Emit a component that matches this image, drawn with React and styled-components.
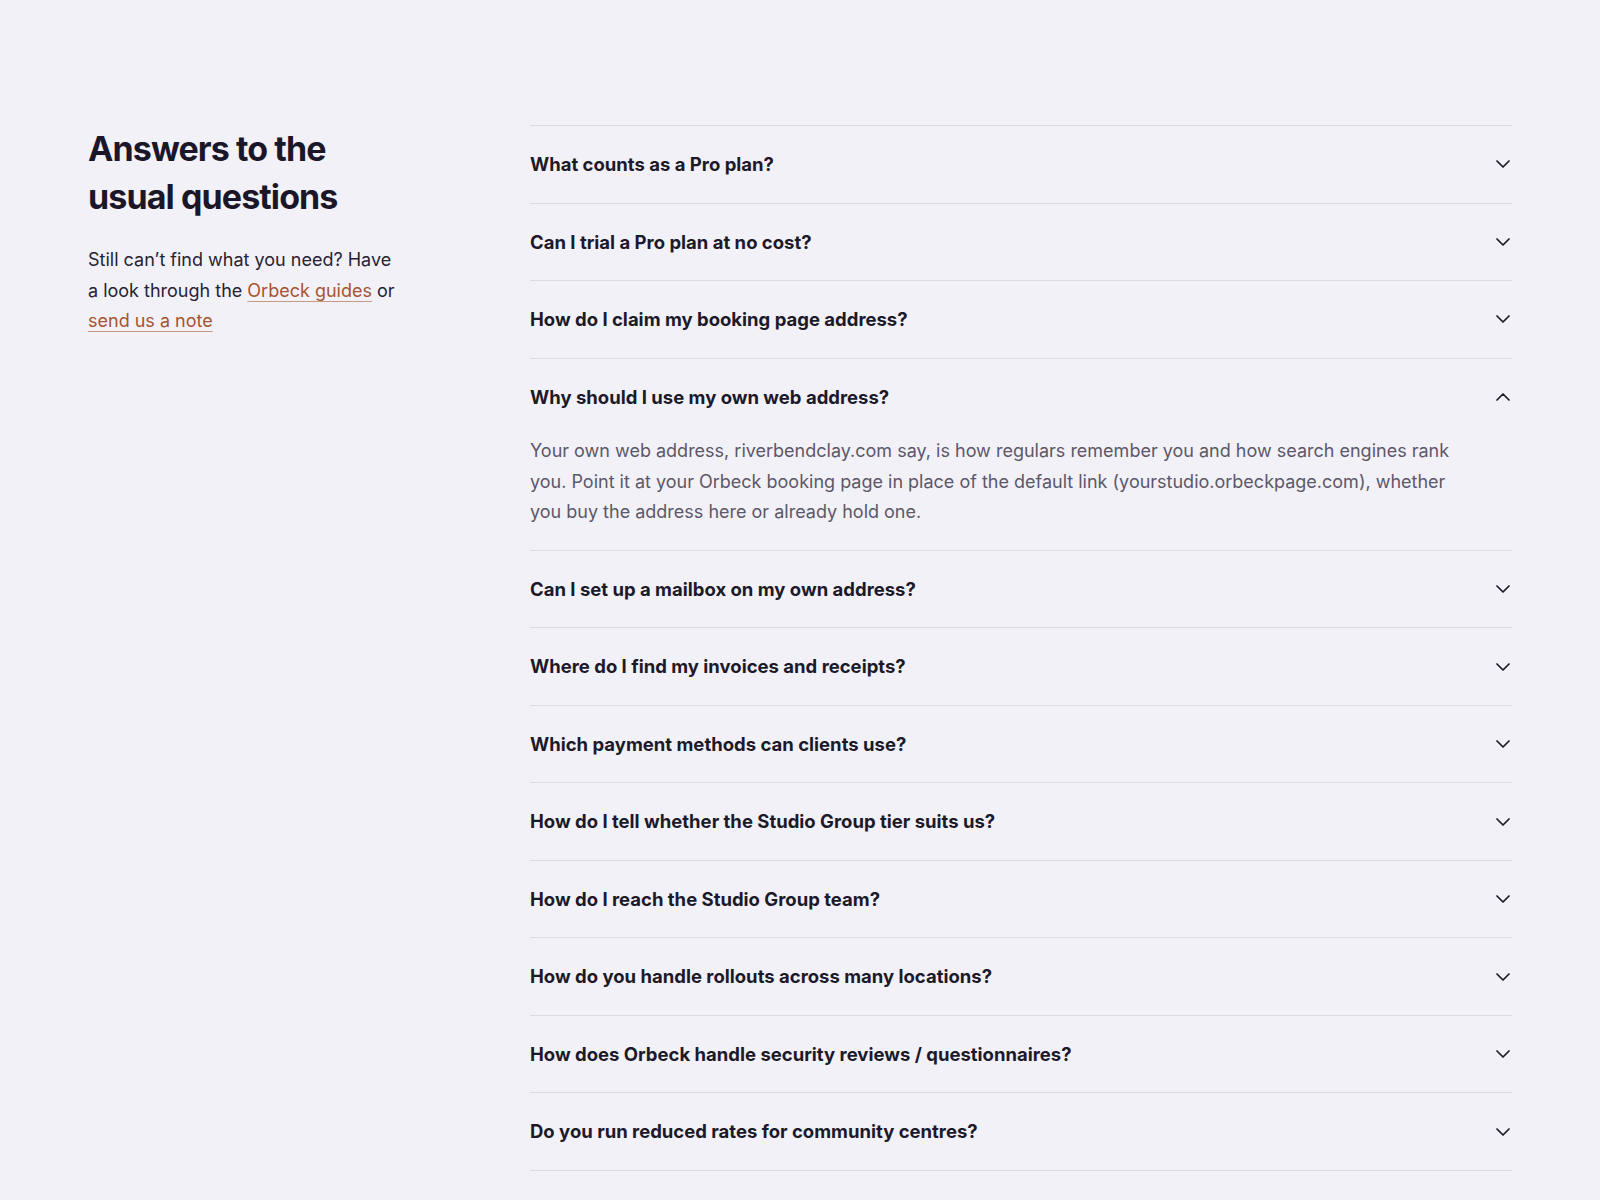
import React, { useState } from "react";
import styled, { createGlobalStyle } from "styled-components";

const GlobalStyle = createGlobalStyle`
  html, body {
    margin: 0;
    padding: 0;
    background: #f3f1f8;
  }
  body {
    font-family: Inter, "Noto Sans", sans-serif;
    color: #1b1828;
    -webkit-font-smoothing: antialiased;
  }
  * { box-sizing: border-box; }
`;

const Page = styled.main`
  max-width: 1424px;
  margin: 0 auto;
  padding: 125px 0 40px;
  display: grid;
  grid-template-columns: 378px 1fr;
  column-gap: 64px;
  align-items: start;
`;

const Intro = styled.div`
  display: flex;
  flex-direction: column;
  gap: 24px;
`;

const Heading = styled.h2`
  margin: 0;
  font-size: 34px;
  line-height: 48px;
  font-weight: 700;
  letter-spacing: -0.9px;
  color: #1b1728;
`;

const Lead = styled.p`
  margin: 0;
  max-width: 330px;
  font-size: 18px;
  line-height: 30.6px;
  color: #262333;
`;

const Link = styled.a`
  color: #a5552f;
  text-decoration: underline;
  text-decoration-thickness: 1px;
  text-underline-offset: 4px;
  text-decoration-color: #c79a84;
`;

const List = styled.div`
  border-top: 1px solid #dddae4;
`;

const Item = styled.div`
  border-bottom: 1px solid #dddae4;
`;

const Question = styled.button`
  display: flex;
  align-items: center;
  justify-content: space-between;
  width: 100%;
  padding: 24px 2px 24px 0;
  border: 0;
  background: none;
  cursor: pointer;
  font-family: inherit;
  font-size: 18.5px;
  line-height: 28.5px;
  font-weight: 700;
  color: #1c1a29;
  text-align: left;
`;

const Chevron = styled.svg`
  flex: none;
  width: 14px;
  height: 8px;
  transform: ${(p) => (p.$open ? "rotate(180deg)" : "none")};
`;

const Answer = styled.p`
  margin: 0;
  padding: 1px 48px 22px 0;
  font-size: 18px;
  line-height: 30.6px;
  color: #5b5869;
`;

const faqs = [
  { q: "What counts as a Pro plan?" },
  { q: "Can I trial a Pro plan at no cost?" },
  { q: "How do I claim my booking page address?" },
  {
    q: "Why should I use my own web address?",
    a: "Your own web address, riverbendclay.com say, is how regulars remember you and how search engines rank you. Point it at your Orbeck booking page in place of the default link (yourstudio.orbeckpage.com), whether you buy the address here or already hold one.",
  },
  { q: "Can I set up a mailbox on my own address?" },
  { q: "Where do I find my invoices and receipts?" },
  { q: "Which payment methods can clients use?" },
  { q: "How do I tell whether the Studio Group tier suits us?" },
  { q: "How do I reach the Studio Group team?" },
  { q: "How do you handle rollouts across many locations?" },
  { q: "How does Orbeck handle security reviews / questionnaires?" },
  { q: "Do you run reduced rates for community centres?" },
];

function ChevronIcon({ open }) {
  return (
    <Chevron $open={open} viewBox="0 0 14 8" fill="none" aria-hidden="true">
      <path
        d="M1 1l6 6 6-6"
        stroke="#1c1a29"
        strokeWidth="1.7"
        strokeLinecap="round"
        strokeLinejoin="round"
      />
    </Chevron>
  );
}

export default function App() {
  const [open, setOpen] = useState(3);
  return (
    <>
      <GlobalStyle />
      <Page>
        <Intro>
          <Heading>
            Answers to the
            <br />
            usual questions
          </Heading>
          <Lead>
            Still can’t find what you need? Have
            <br />
            a look through the <Link href="#">Orbeck guides</Link> or
            <br />
            <Link href="#">send us a note</Link>
          </Lead>
        </Intro>
        <List>
          {faqs.map((f, i) => (
            <Item key={f.q}>
              <Question onClick={() => setOpen(open === i ? -1 : i)}>
                {f.q}
                <ChevronIcon open={open === i} />
              </Question>
              {open === i && f.a && <Answer>{f.a}</Answer>}
            </Item>
          ))}
        </List>
      </Page>
    </>
  );
}
